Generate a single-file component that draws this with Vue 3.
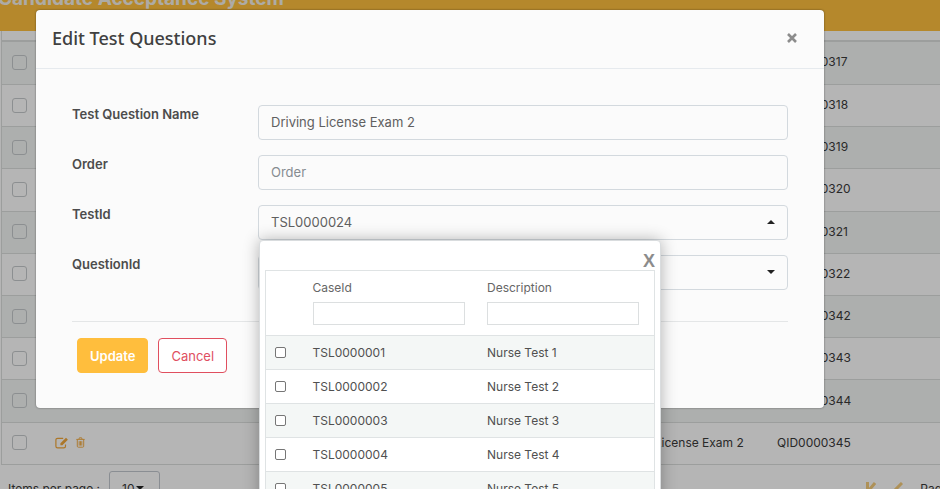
<script setup>
import { ref } from 'vue'

const questionIds = [
  'QID0000317', 'QID0000318', 'QID0000319', 'QID0000320', 'QID0000321',
  'QID0000322', 'QID0000342', 'QID0000343', 'QID0000344', 'QID0000345'
]
const cases = [1, 2, 3, 4, 5, 6].map((n) => ({
  id: 'TSL000000' + n,
  description: 'Nurse Test ' + n
}))

const name = ref('Driving License Exam 2')
const order = ref('')
const testId = ref('TSL0000024')
const questionId = ref('')
const perPage = ref('10')
</script>

<template>
  <div class="app">
    <div class="page">
      <header class="topbar"><span class="brand">Candidate Acceptance System</span></header>

      <div class="list">
        <table class="grid">
          <colgroup>
            <col class="c-check" />
            <col />
            <col class="c-name" />
            <col class="c-id" />
          </colgroup>
          <tbody>
            <tr v-for="id in questionIds" :key="id">
              <td><input type="checkbox" class="row-check" :aria-label="'Select ' + id" /></td>
              <td>
                <div class="actions">
                  <button type="button" class="icon-btn" aria-label="Edit">
                    <svg width="14" height="12" viewBox="0 0 14 12" fill="none" stroke="currentColor">
                      <path d="M8.2 1.3H2.6A1.7 1.7 0 0 0 .9 3v6.2a1.7 1.7 0 0 0 1.7 1.7h6.2a1.7 1.7 0 0 0 1.7-1.7V7.4" stroke-width="1.2" />
                      <path d="M5.4 8.2V6.3L11 .8 12.9 2.7 7.4 8.2z" fill="currentColor" stroke="none" />
                    </svg>
                  </button>
                  <button type="button" class="icon-btn" aria-label="Delete">
                    <svg width="9" height="11" viewBox="0 0 9 11" fill="none" stroke="currentColor">
                      <path d="M.3 2.4h8.4M2.9 2.2l.5-1.4h2.2l.5 1.4M1.3 2.6v6.6a1 1 0 0 0 1 1h4.4a1 1 0 0 0 1-1V2.6M3.2 4.2v4.4M4.5 4.2v4.4M5.8 4.2v4.4" stroke-width=".9" />
                    </svg>
                  </button>
                </div>
              </td>
              <td>Driving License Exam 2</td>
              <td>{{ id }}</td>
            </tr>
          </tbody>
        </table>
      </div>

      <div class="pager">
        <label for="per-page">Items per page :</label>
        <span class="pick small">
          <select id="per-page" v-model="perPage"><option>10</option></select>
          <svg class="caret" width="8" height="4" viewBox="0 0 8 4"><path d="M0 0h8L4 4z" fill="currentColor" /></svg>
        </span>
        <div class="pages">
          <button type="button" class="icon-btn pale" aria-label="First page">
            <svg width="10" height="14" viewBox="0 0 10 14" fill="none" stroke="currentColor" stroke-width="3"><path d="M1.5 0v14M9 1L4 7l5 6" /></svg>
          </button>
          <button type="button" class="icon-btn pale" aria-label="Previous page">
            <svg width="10" height="14" viewBox="0 0 10 14" fill="none" stroke="currentColor" stroke-width="3"><path d="M9 1L3 7l6 6" /></svg>
          </button>
          <span>Page</span>
        </div>
      </div>
    </div>

    <div class="backdrop">
      <section class="modal" role="dialog" aria-labelledby="modal-title">
        <header class="modal-head">
          <h1 id="modal-title">Edit Test Questions</h1>
          <button type="button" class="close" aria-label="Close">
            <svg width="10" height="10" viewBox="0 0 10 10" fill="none" stroke="currentColor" stroke-width="2.6"><path d="M1 1l8 8M9 1L1 9" /></svg>
          </button>
        </header>

        <form class="modal-body" @submit.prevent>
          <div class="fields">
            <label for="q-name">Test Question Name</label>
            <input id="q-name" v-model="name" type="text" class="box" />

            <label for="q-order">Order</label>
            <input id="q-order" v-model="order" type="text" class="box" placeholder="Order" />

            <label for="q-test">TestId</label>
            <div class="pick">
              <select id="q-test" v-model="testId" class="box"><option>TSL0000024</option></select>
              <svg class="caret" width="8" height="4" viewBox="0 0 8 4"><path d="M0 4h8L4 0z" fill="currentColor" /></svg>

              <div class="popup">
                <button type="button" class="popup-close">X</button>
                <table class="cases">
                  <colgroup>
                    <col class="p-check" />
                    <col />
                    <col />
                  </colgroup>
                  <thead>
                    <tr>
                      <th></th>
                      <th><label for="f-case">CaseId</label><input id="f-case" type="text" class="filter" /></th>
                      <th><label for="f-desc">Description</label><input id="f-desc" type="text" class="filter" /></th>
                    </tr>
                  </thead>
                  <tbody>
                    <tr v-for="c in cases" :key="c.id">
                      <td><input type="checkbox" class="case-check" :aria-label="'Select ' + c.id" /></td>
                      <td>{{ c.id }}</td>
                      <td>{{ c.description }}</td>
                    </tr>
                  </tbody>
                </table>
              </div>
            </div>

            <label for="q-question">QuestionId</label>
            <div class="pick">
              <select id="q-question" v-model="questionId" class="box"><option value=""></option></select>
              <svg class="caret" width="8" height="4" viewBox="0 0 8 4"><path d="M0 0h8L4 4z" fill="currentColor" /></svg>
            </div>
          </div>

          <div class="buttons">
            <button type="submit" class="btn primary">Update</button>
            <button type="button" class="btn outline">Cancel</button>
          </div>
        </form>
      </section>
    </div>
  </div>
</template>

<style>
body {
  margin: 0;
}
</style>

<style scoped>
* {
  box-sizing: border-box;
}

.app {
  position: relative;
  height: 100vh;
  overflow: hidden;
  background: #fff;
  color: #4c4c4c;
  font: 12px/16px Inter, "Open Sans", sans-serif;
}

button,
input,
select {
  margin: 0;
  font: inherit;
  color: inherit;
}

/* Page behind the dialog */
.topbar {
  display: flex;
  align-items: flex-start;
  height: 31px;
  overflow: hidden;
  background: #ffc03e;
}

.brand {
  margin: -14px 0 0 -2px;
  color: #f4f1ea;
  font-size: 19px;
  line-height: 26px;
  font-weight: 700;
  white-space: nowrap;
}

.list {
  margin-left: 1px;
  padding-top: 9px;
  border-left: 1px solid #dcdfde;
}

.grid {
  width: 100%;
  height: 425px;
  table-layout: fixed;
  border-collapse: collapse;
  border-top: 2px solid #dcdfde;
  color: #3a3a3a;
}

.c-check {
  width: 43px;
}

.c-name {
  width: 166px;
}

.c-id {
  width: 173px;
}

.grid td {
  padding: 0 10px 1px;
  border-bottom: 1px solid #dcdfde;
  vertical-align: middle;
  white-space: nowrap;
}

.grid tr:nth-child(odd) {
  background: #f4f7f5;
}

.row-check {
  display: block;
  width: 15px;
  height: 15px;
  appearance: none;
  border: 1px solid #c6cacc;
  border-radius: 3px;
}

.actions {
  display: flex;
  align-items: center;
  gap: 7px;
}

.icon-btn {
  display: flex;
  padding: 0;
  border: 0;
  background: none;
  color: #f3a83a;
}

.pale {
  color: #f5cd7c;
}

.pager {
  display: flex;
  align-items: center;
  gap: 9px;
  padding: 6px 0 6px 8px;
  color: #3a3a3a;
}

.small select {
  width: 51px;
  height: 35px;
  padding: 0 12px;
  appearance: none;
  border: 1px solid #c3c8d0;
  border-radius: 3px;
  background: #fff;
}

.small .caret {
  right: 16px;
}

.pages {
  display: flex;
  align-items: center;
  gap: 17px;
  margin-left: auto;
  margin-right: -9px;
}

/* Dialog */
.backdrop {
  position: absolute;
  inset: 0;
  padding: 10px 116px 0 36px;
  background: rgba(0, 0, 0, 0.29);
}

.modal {
  border-radius: 4px;
  background: #fbfbfb;
  box-shadow: 0 0 2px rgba(0, 0, 0, 0.5);
}

.modal-head {
  display: flex;
  align-items: center;
  justify-content: space-between;
  height: 59px;
  padding: 0 27px 2px 16px;
  border-bottom: 1px solid #e6eaee;
}

h1 {
  margin: 0;
  color: #404040;
  font: 500 18px/24px "Noto Sans", "Open Sans", sans-serif;
}

.close {
  display: flex;
  padding: 0;
  border: 0;
  background: none;
  color: #8c8c8c;
}

.modal-body {
  padding: 36px 36px 35px;
}

.fields {
  display: grid;
  grid-template-columns: 186px 1fr;
  row-gap: 15px;
  padding-bottom: 31px;
  border-bottom: 1px solid #e4e6e7;
}

.fields > label {
  padding-top: 1px;
  font-size: 13px;
  font-weight: 600;
}

.box {
  display: block;
  width: 100%;
  height: 35px;
  padding: 0 12px 2px;
  appearance: none;
  border: 1px solid #d3d9de;
  border-radius: 4px;
  outline: 0;
  background: #fbfbfb;
  color: #606060;
  font-size: 13px;
}

.box::placeholder {
  color: #868c91;
  opacity: 1;
}

.pick {
  position: relative;
}

.caret {
  position: absolute;
  top: 15px;
  right: 13px;
  color: #222;
  pointer-events: none;
}

.buttons {
  display: flex;
  gap: 10px;
  padding: 16px 5px 0;
}

.btn {
  height: 35px;
  padding: 0 12px;
  border: 1px solid #ffbe3d;
  border-radius: 4px;
  font-size: 13px;
}

.primary {
  background: #ffbe3d;
  color: #fff;
  font-weight: 600;
}

.outline {
  border-color: #e04f5f;
  background: #fff;
  color: #e04f5f;
}

/* Case picker */
.popup {
  position: absolute;
  z-index: 2;
  top: 35px;
  left: 1px;
  width: 402px;
  max-width: 100%;
  padding: 11px 5px 5px;
  border: 1px solid #d9dcde;
  border-radius: 4px;
  background: #fff;
  box-shadow: 0 0 16px rgba(0, 0, 0, 0.3);
}

.popup-close {
  display: block;
  height: 18px;
  margin-left: auto;
  padding: 0;
  border: 0;
  background: none;
  color: #8c8c8c;
  font: 700 18px/18px "Liberation Sans", sans-serif;
}

.cases {
  width: 100%;
  table-layout: fixed;
  border-collapse: collapse;
  border: 1px solid #dfe3e4;
}

.p-check {
  width: 40px;
}

.cases th {
  height: 64px;
  padding: 9px 15px 10px 7px;
  text-align: left;
  vertical-align: top;
  font-weight: 400;
}

.cases th label {
  display: block;
  color: #666;
}

.filter {
  display: block;
  width: 100%;
  height: 23px;
  margin-top: 6px;
  border: 1px solid #dcdfe0;
  background: #fff;
}

.cases td {
  height: 34px;
  padding: 0 7px;
  border-top: 1px solid #dfe3e4;
  color: #505050;
}

.cases td:first-child {
  padding: 0 9px;
}

.cases tbody tr:nth-child(odd) {
  background: #f4f7f6;
}

.case-check {
  display: block;
  width: 11px;
  height: 11px;
  appearance: none;
  border: 1px solid #767676;
  border-radius: 2px;
  background: #fff;
}
</style>
